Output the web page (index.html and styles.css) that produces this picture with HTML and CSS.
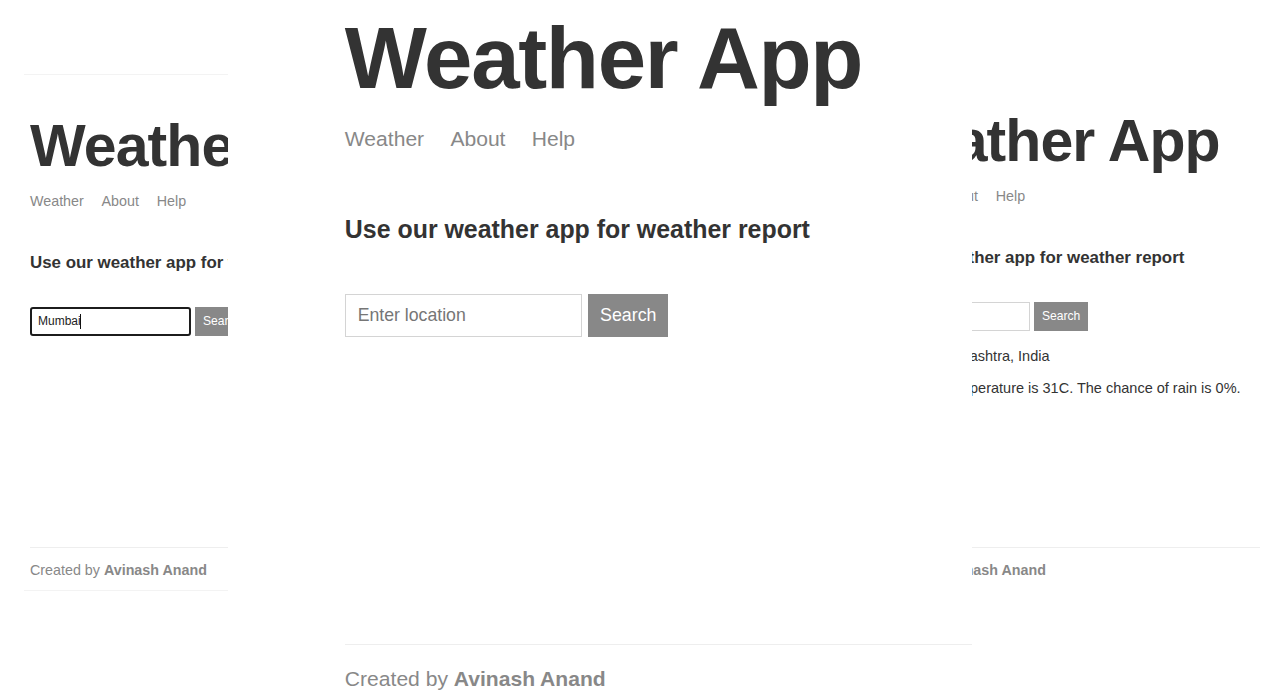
FILE: index.html
```html
<!DOCTYPE html>
<html lang="en">
<head>
<meta charset="utf-8">
<title>Weather App</title>
<link rel="stylesheet" href="styles.css">
</head>
<body>
<div class="collage">

  <section class="panel panel--left">
    <div class="shot shot--left">
      <header class="shot__header">
        <h1 class="shot__title">Weather App</h1>
        <nav class="shot__nav"><a href="#">Weather</a><a href="#">About</a><a href="#">Help</a></nav>
      </header>
      <main class="shot__main">
        <h2 class="shot__lead">Use our weather app for weather report</h2>
        <form class="search">
          <span class="search__field">
            <input class="search__input search__input--focused" type="text" value="Mumbai" placeholder="Enter location">
            <span class="search__caret"></span>
          </span>
          <button class="search__button" type="button">Search</button>
        </form>
      </main>
      <footer class="shot__footer">Created by <strong>Avinash Anand</strong></footer>
    </div>
  </section>

  <section class="panel panel--center">
    <div class="shot shot--center">
      <header class="shot__header">
        <h1 class="shot__title">Weather App</h1>
        <nav class="shot__nav"><a href="#">Weather</a><a href="#">About</a><a href="#">Help</a></nav>
      </header>
      <main class="shot__main">
        <h2 class="shot__lead">Use our weather app for weather report</h2>
        <form class="search">
          <span class="search__field">
            <input class="search__input" type="text" placeholder="Enter location">
          </span>
          <button class="search__button" type="button">Search</button>
        </form>
      </main>
      <footer class="shot__footer">Created by <strong>Avinash Anand</strong></footer>
    </div>
  </section>

  <section class="panel panel--right">
    <div class="shot shot--right">
      <header class="shot__header">
        <h1 class="shot__title">Weather App</h1>
        <nav class="shot__nav"><a href="#">Weather</a><a href="#">About</a><a href="#">Help</a></nav>
      </header>
      <main class="shot__main">
        <h2 class="shot__lead">Use our weather app for weather report</h2>
        <form class="search">
          <span class="search__field">
            <input class="search__input" type="text" placeholder="">
          </span>
          <button class="search__button" type="button">Search</button>
        </form>
        <div class="report">
          <p class="report__line">Mumbai, Maharashtra, India</p>
          <p class="report__line">Sunny. The temperature is 31C. The chance of rain is 0%.</p>
        </div>
      </main>
      <footer class="shot__footer">Created by <strong>Avinash Anand</strong></footer>
    </div>
  </section>

</div>
</body>
</html>
```
FILE: styles.css
```css
html, body {
  margin: 0;
  padding: 0;
  background: #ffffff;
}

.collage {
  position: relative;
  width: 1271px;
  height: 697px;
  overflow: hidden;
  background: #ffffff;
}

.panel {
  position: absolute;
  top: 0;
  height: 697px;
  overflow: hidden;
  background: #ffffff;
}

.panel--left { left: 0; width: 228px; }
.panel--center { left: 228px; width: 744px; }
.panel--right { left: 972px; width: 299px; }

/* one captured page; --k is the zoom of that capture */
.shot {
  --k: 1;
  position: absolute;
  display: flex;
  flex-direction: column;
  box-sizing: content-box;
  padding-left: calc(6px * var(--k));
  font-family: "Liberation Sans", Arial, Helvetica, sans-serif;
  color: #333333;
}

.shot--left {
  left: 24px;
  top: 74px;
  width: 600px;
  height: 515px;
  border-top: 1px solid #f3f3f3;
  border-bottom: 1px solid #f3f3f3;
}

.shot--center {
  --k: 1.475;
  left: 108px;
  top: -48px;
  width: 900px;
  height: 755px;
}

.shot--right {
  left: -109px;
  top: 70px;
  width: 391px;
  height: 520px;
}

.shot__header {
  padding-top: calc(42.2px * var(--k));
}

.shot__title {
  margin: 0;
  font-size: calc(59px * var(--k));
  line-height: 1;
  font-weight: 700;
  letter-spacing: calc(-0.9px * var(--k));
  white-space: nowrap;
  color: #333333;
}

.shot__nav {
  display: flex;
  gap: calc(17.8px * var(--k));
  margin-top: calc(17px * var(--k));
  font-size: calc(14.3px * var(--k));
  line-height: calc(17px * var(--k));
}

.shot__nav a {
  color: #888888;
  text-decoration: none;
}

.shot__main {
  flex: 1;
}

.shot__lead {
  margin: calc(43px * var(--k)) 0 0;
  font-size: calc(16.9px * var(--k));
  line-height: calc(20px * var(--k));
  font-weight: 700;
  white-space: nowrap;
  color: #333333;
}

.search {
  display: flex;
  gap: calc(4px * var(--k));
  height: calc(29px * var(--k));
  margin: calc(33.5px * var(--k)) 0 0;
}

.search__field {
  position: relative;
  display: block;
  height: 100%;
}

.search__input {
  box-sizing: border-box;
  width: calc(161px * var(--k));
  height: 100%;
  margin: 0;
  padding: 0 calc(8px * var(--k));
  border: 1px solid #d4d4d4;
  border-radius: 0;
  background: #ffffff;
  font-family: inherit;
  font-size: calc(12px * var(--k));
  color: #222222;
  outline: none;
}

.search__input::placeholder {
  color: #767676;
}

.search__input--focused {
  border: 2px solid #1c1c1c;
  border-radius: 3px;
  padding-left: 6px;
}

.search__caret {
  position: absolute;
  left: 50px;
  top: 7px;
  width: 1px;
  height: 15px;
  background: #111111;
}

.search__button {
  box-sizing: border-box;
  height: 100%;
  margin: 0;
  padding: 0 calc(8px * var(--k));
  border: 0;
  background: #888888;
  color: #ffffff;
  font-family: inherit;
  font-size: calc(12.1px * var(--k));
  cursor: pointer;
}

.report__line {
  margin: calc(15px * var(--k)) 0 0;
  font-size: calc(14.5px * var(--k));
  line-height: calc(17px * var(--k));
  white-space: nowrap;
  color: #333333;
}

.report__line:first-child {
  margin-top: calc(17px * var(--k));
}

.shot__footer {
  border-top: 1px solid #eeeeee;
  padding: calc(14px * var(--k)) 0 calc(11px * var(--k));
  font-size: calc(14.3px * var(--k));
  line-height: calc(17px * var(--k));
  color: #888888;
  white-space: nowrap;
}

.shot__footer strong {
  font-weight: 700;
}
```
